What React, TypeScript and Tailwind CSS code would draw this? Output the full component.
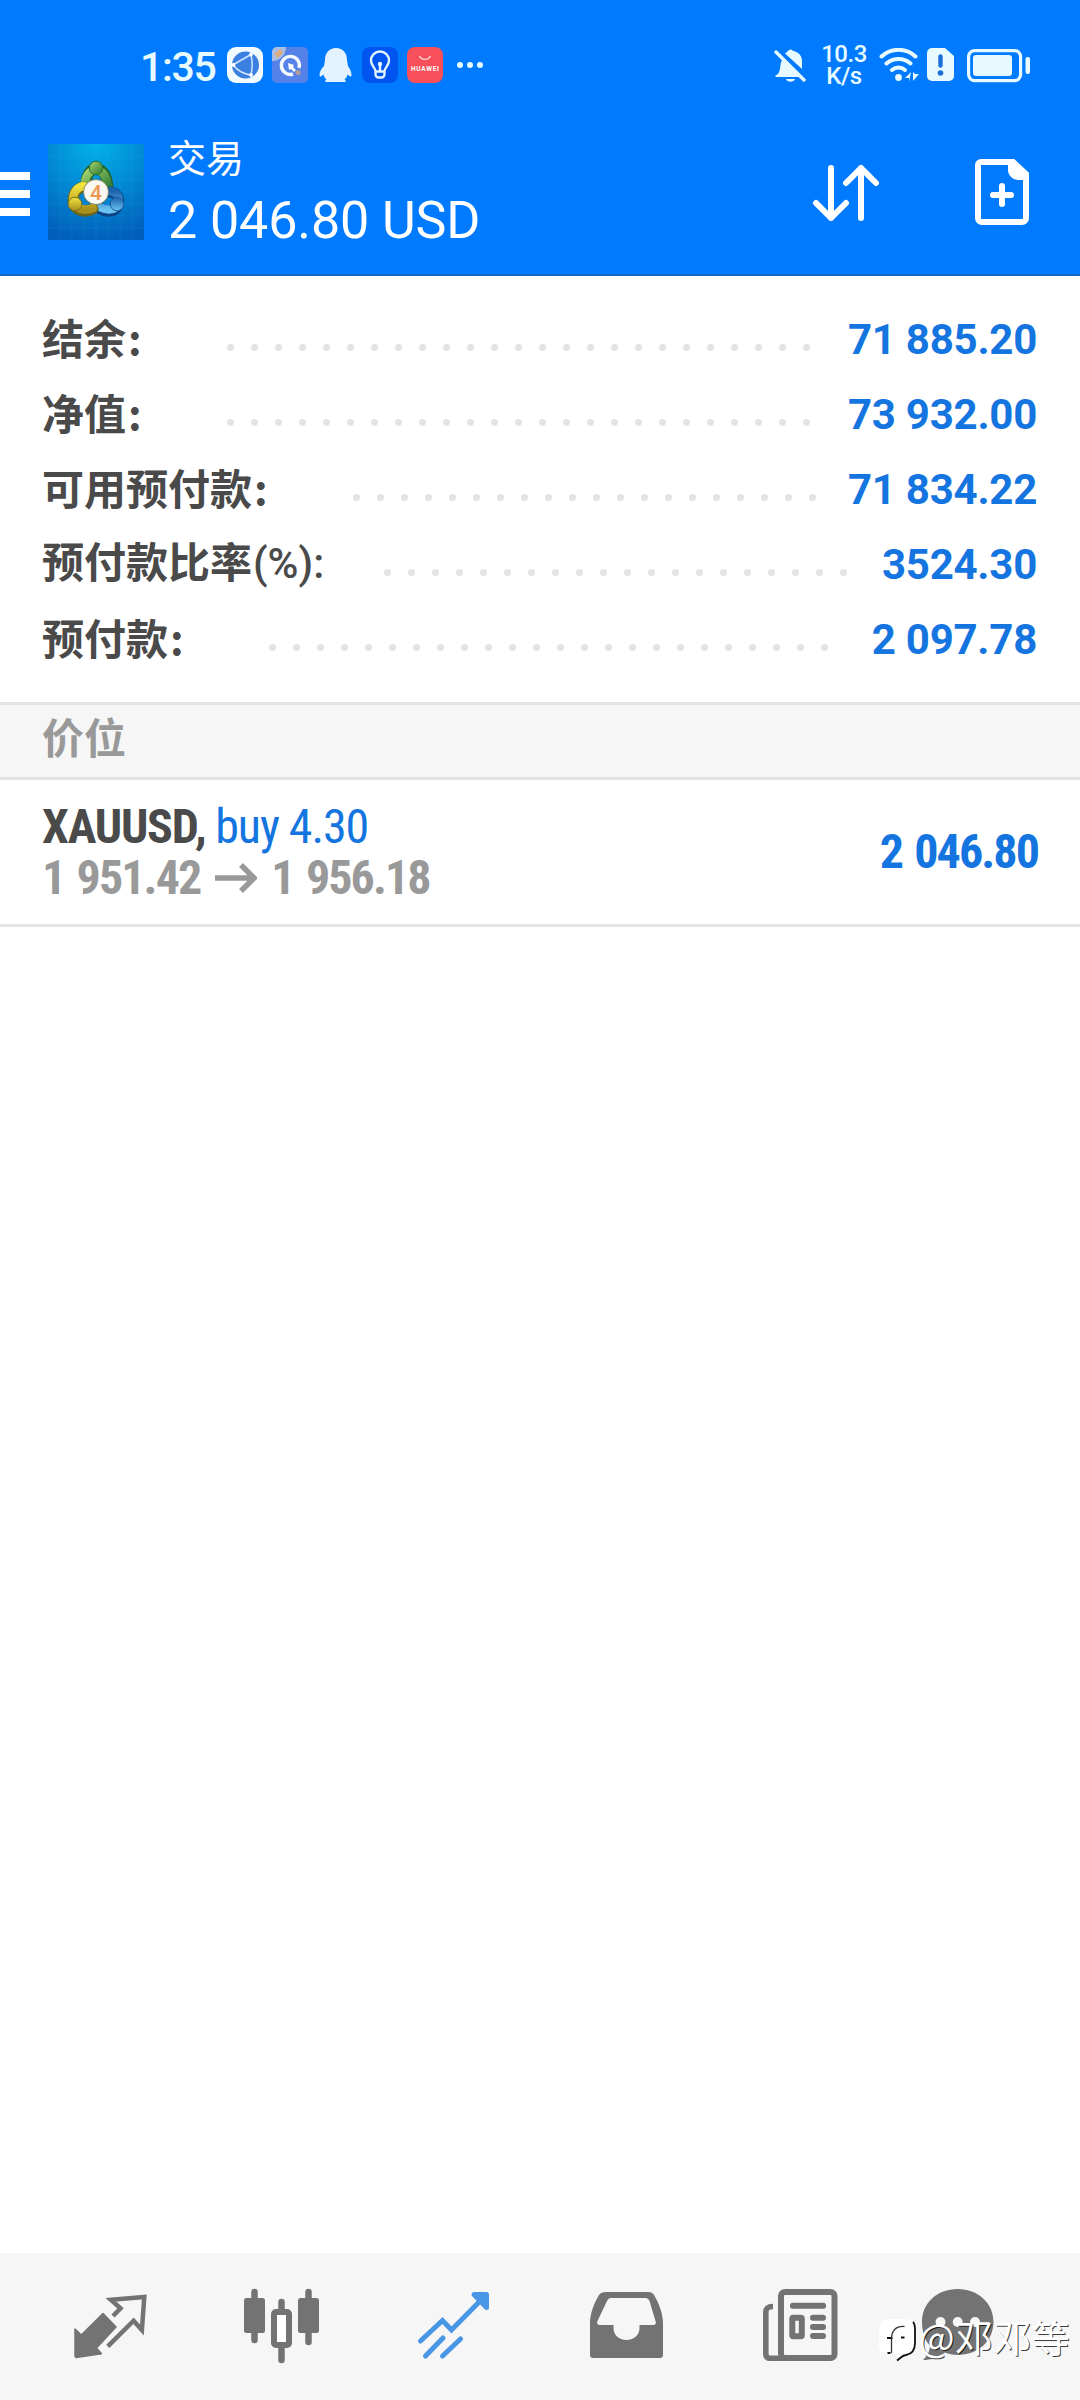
import React from 'react';

const summary = [
  { label: '结余', suffix: ':', value: '71 885.20', dots: 25, pad: 'w-[185px]' },
  { label: '净值', suffix: ':', value: '73 932.00', dots: 25, pad: 'w-[185px]' },
  { label: '可用预付款', suffix: ':', value: '71 834.22', dots: 20, pad: 'w-[311px]' },
  { label: '预付款比率', ratio: '(%):', value: '3524.30', dots: 20, pad: 'w-[342px]' },
  { label: '预付款', suffix: ':', value: '2 097.78', dots: 24, pad: 'w-[227px]' },
];

const StatusBar = () => (
  <div className="flex h-[130px] items-start pt-[46px] text-[#e6faff]">
    <span className="ml-[140px] w-[87px] pt-px text-[41px] leading-[40px] font-medium tracking-[-1.300px]">1:35</span>
    <div className="flex gap-[9px] pt-px">
      {/* browser */}
      <svg className="h-9 w-9" viewBox="0 0 36 36">
        <rect width="36" height="36" rx="9" fill="#f2fbff" />
        <circle cx="18.500" cy="18" r="13.500" fill="#3b7fe0" />
        <path d="M6.500 17.500 24 7.500M6.500 18.500C11 24 17 27 24 28M24 7.500c1.500 7 1.500 14 0 20" fill="none" stroke="#cfe6ff" strokeWidth="1.500" />
        <circle cx="6.500" cy="18" r="1.900" fill="#fff" />
        <circle cx="24" cy="7.500" r="1.900" fill="#fff" />
        <circle cx="24" cy="28" r="1.900" fill="#fff" />
      </svg>
      {/* game assistant */}
      <svg className="h-9 w-9" viewBox="0 0 36 36">
        <rect width="36" height="36" rx="5" fill="#5482e8" />
        <path d="M0 14V5a5 5 0 0 1 5-5h9c0 8-6 14-14 14Z" fill="#a9bde2" />
        <path d="m3 8 6-5M5 10l5-5" stroke="#e8a867" strokeWidth="2" />
        <path d="M21 27a9 9 0 1 1 6-6" fill="none" stroke="#f2f9ff" strokeWidth="3.400" />
        <path d="m16 16 6 2-1 2 3 3-2 2-3-3-2 1Z" fill="#fff" />
        <circle cx="26" cy="25.500" r="2.600" fill="#b09a9c" />
      </svg>
      {/* penguin */}
      <svg className="h-9 w-9" viewBox="0 0 36 36">
        <path d="M19 1c7 0 11 5 11 12l1 6c2 3 3.500 6 3.500 9 0 1.500-1 2-2 1l-2-1.500c-.5 2-1.500 4-3 5 2 1 1.500 2.500 0 2.500H9.500c-1.500 0-2-1.500 0-2.500-1.500-1-2.500-3-3-5l-2 1.500c-1 1-2 .5-2-1 0-3 1.500-6 4.500-9l1-6c0-7 4-12 11-12Z" fill="#e3f2ff" />
      </svg>
      {/* tips */}
      <svg className="h-9 w-9" viewBox="0 0 36 36">
        <rect width="36" height="36" rx="8" fill="#0055f0" />
        <path d="M13.500 24c0-3-4.500-5-4.500-10.500a9 9 0 0 1 18 0C27 19 22.500 21 22.500 24v3.500a3 3 0 0 1-3 3h-3a3 3 0 0 1-3-3Zm0 .5h9M18 24v-7" fill="none" stroke="#e0f4ff" strokeWidth="2.400" />
        <circle cx="18" cy="17" r="2.200" fill="#e0f4ff" />
      </svg>
      {/* store */}
      <svg className="h-9 w-9" viewBox="0 0 36 36">
        <rect width="36" height="36" rx="8" fill="#f7505a" />
        <path d="M12.500 9c2 4.500 9 4.500 11 0" fill="none" stroke="#ffd9dc" strokeWidth="1.300" />
        <text x="18" y="23.500" textAnchor="middle" textLength="28" fontSize="6.500" fontWeight="700" fontFamily="Roboto, sans-serif" fill="#fff">HUAWEI</text>
      </svg>
    </div>
    <div className="ml-[14px] flex gap-[4.500px] pt-4">
      <i className="h-[5.500px] w-[5.500px] rounded-full bg-current" />
      <i className="h-[5.500px] w-[5.500px] rounded-full bg-current" />
      <i className="h-[5.500px] w-[5.500px] rounded-full bg-current" />
    </div>
    <div className="mr-[48px] ml-auto flex">
      <svg className="mt-0.5 h-9 w-8" viewBox="0 0 32 36" fill="currentColor">
        <path d="M4 26c2-3 2-6 2.500-9 .2-2 .8-4 2-5.500L25 27.500V29H1.500v-1.500Z" />
        <path d="M11 5.500C12.500 4 14 3 14.500 2.500c1-1.500 3-1.500 4 0C24 4 28 7 28 13v8Z" />
        <path d="M12 31h9c-1 3.500-8 3.500-9 0Z" />
        <path d="m2 4 28 28" stroke="currentColor" strokeWidth="3.400" strokeLinecap="round" />
      </svg>
      <div className="-mt-[3px] ml-[14px] flex w-[48px] flex-col text-center text-[24px] leading-[22px] font-medium tracking-[-0.500px]">
        <span>10.3</span>
        <span>K/s</span>
      </div>
      <svg className="mt-0.5 ml-[11px] h-9 w-10" viewBox="0 0 40 36" fill="none" stroke="currentColor" strokeWidth="4" strokeLinecap="round">
        <path d="M2.500 8.500a25 25 0 0 1 34 0M7.500 15.500a18 18 0 0 1 24 0M13 22a10 10 0 0 1 13 0" />
        <circle cx="19.500" cy="29.500" r="3.400" fill="currentColor" stroke="none" />
        <path d="m32 24-6 6h4v4Zm2 0v9l6-7h-4Z" fill="currentColor" stroke="none" />
      </svg>
      <svg className="mt-0.5 ml-2 h-[34px] w-7" viewBox="0 0 28 34">
        <path d="M5 0h13l9 8v20a5 5 0 0 1-5 5H5a5 5 0 0 1-5-5V5a5 5 0 0 1 5-5Z" fill="currentColor" />
        <path d="M13.500 8.500v9" stroke="#1a6fd6" strokeWidth="4.400" strokeLinecap="round" />
        <circle cx="13.500" cy="25" r="2.800" fill="#1a6fd6" />
      </svg>
      <svg className="mt-[3px] ml-3 h-[34px] w-[65px]" viewBox="0 0 65 34">
        <rect x="1.600" y="1.600" width="52" height="30" rx="6" fill="none" stroke="currentColor" strokeWidth="3.200" />
        <rect x="6" y="6" width="39" height="21" rx="3" fill="currentColor" />
        <rect x="58.500" y="8" width="4.500" height="17" rx="2" fill="currentColor" />
      </svg>
    </div>
  </div>
);

const Logo = () => (
  <svg className="h-24 w-24" viewBox="0 0 96 96">
    <defs>
      <radialGradient id="sky" cx=".5" cy="0" r="1">
        <stop offset="0" stopColor="#02b2ea" />
        <stop offset=".55" stopColor="#0185d2" />
        <stop offset="1" stopColor="#0160bb" />
      </radialGradient>
      <linearGradient id="green" x1="0" y1="0" x2="1" y2="1">
        <stop offset="0" stopColor="#a5d46c" />
        <stop offset="1" stopColor="#2a7a35" />
      </linearGradient>
      <linearGradient id="gold" x1="0" y1="0" x2="0" y2="1">
        <stop offset="0" stopColor="#f0e33c" />
        <stop offset="1" stopColor="#a98f1c" />
      </linearGradient>
      <linearGradient id="blue" x1="0" y1="0" x2="0" y2="1">
        <stop offset="0" stopColor="#1c63ad" />
        <stop offset="1" stopColor="#6ac2f2" />
      </linearGradient>
    </defs>
    <rect width="96" height="96" fill="url(#sky)" />
    <path d="M12 0v96M24 0v96M36 0v96M48 0v96M60 0v96M72 0v96M84 0v96M0 12h96M0 24h96M0 36h96M0 48h96M0 60h96M0 72h96M0 84h96" stroke="#5cc4f5" strokeOpacity=".1" />
    <g fill="none" strokeLinecap="round">
      <path d="M38 39c1-10 5-14 10-14 8 0 12 9 12 21" stroke="#23642c" strokeWidth="11" />
      <path d="M37 39c1-9 6-13 11-13 7 0 12 8 12 20" stroke="url(#green)" strokeWidth="8.500" />
      <path d="M61 48c8 0 11 6 9 12-2 9-12 9-20 3" stroke="#0d4384" strokeWidth="11" />
      <path d="M61 47c8 0 11 6 9 12-2 8-12 8-20 3" stroke="url(#blue)" strokeWidth="8.500" />
      <path d="M36 43c-8 1-11 8-11 14 1 9 10 13 20 8" stroke="#67651c" strokeWidth="11" />
      <path d="M36 42c-8 1-11 8-11 14 1 8 10 12 20 8" stroke="url(#gold)" strokeWidth="8.500" />
    </g>
    <circle cx="48" cy="24" r="6.800" fill="url(#green)" stroke="#276b2d" />
    <circle cx="27" cy="60" r="6.800" fill="url(#gold)" stroke="#80701c" />
    <circle cx="69" cy="60" r="6.800" fill="url(#blue)" stroke="#1b5b9c" />
    <circle cx="48" cy="48" r="12.500" fill="#faf8f2" stroke="#75713f" strokeWidth=".8" />
    <text x="48" y="55.500" textAnchor="middle" fontSize="21" fontWeight="500" fontFamily="Roboto, sans-serif" fill="#ed9850">4</text>
  </svg>
);

const Header = () => (
  <header className="h-[276px] border-b-2 border-[#0c69c4] bg-[#007aff] text-white">
    <StatusBar />
    <div className="flex items-start">
      <div className="mt-[42px] flex w-[30px] flex-col gap-2.5">
        <span className="h-2 bg-white" />
        <span className="h-2 bg-white" />
        <span className="h-2 bg-white" />
      </div>
      <div className="ml-[18px] pt-[14px]">
        <Logo />
      </div>
      <div className="ml-6 pt-[7px]">
        <h1 className="text-[38px] leading-[44px]">交易</h1>
        <p className="mt-[8px] text-[52px] leading-[64px] tracking-[-0.100px]">2 046.80 USD</p>
      </div>
      <div className="mr-[51px] ml-auto flex pt-[29px]">
        <svg className="mt-[3px] h-[60px] w-[68px]" viewBox="0 0 68 60" fill="none" stroke="currentColor" strokeWidth="6" strokeLinecap="round" strokeLinejoin="round">
          <path d="M19 6v50M4 41l15 15 15-15M49 56V6M34 21 49 6l15 15" />
        </svg>
        <svg className="ml-[95px] h-[66px] w-[54px]" viewBox="0 0 54 66">
          <path d="M6 3h32l13 12v44a4 4 0 0 1-4 4H7a4 4 0 0 1-4-4V6a3 3 0 0 1 3-3Z" fill="none" stroke="currentColor" strokeWidth="6" />
          <path d="M33 3h7l12 12v6h-8c-7 0-11-5-11-10Z" fill="currentColor" />
          <path d="M27 27v18M18 36h18" stroke="currentColor" strokeWidth="6" strokeLinecap="round" />
        </svg>
      </div>
    </div>
  </header>
);

const navIcon = 'h-20 w-20';

const BottomNav = () => (
  <nav className="relative flex h-[147px] bg-[#f6f6f6] pt-8 pl-[70px] text-[#737373]">
    <div className="flex gap-[92px]">
      <svg className={navIcon} viewBox="0 0 80 80">
        <path d="m5 44 6.300 6L33 28.500 46 42 26.500 63l5 5.700L6 72.500 5 71Z" fill="currentColor" stroke="currentColor" strokeWidth="1.500" strokeLinejoin="round" />
        <path d="m43 31 7.500-7.700-9.600-8.600 33.400-2.700-2.400 33-8.300-9.300-25.800 25.600" fill="none" stroke="currentColor" strokeWidth="4.500" />
      </svg>
      <svg className={navIcon} viewBox="0 0 80 80" fill="currentColor">
        <path d="M12.500 7v48M39.500 17v10M39.500 60v15M66.500 7v50" stroke="currentColor" strokeWidth="6.500" strokeLinecap="round" />
        <rect x="2" y="13" width="21" height="35" rx="2.500" />
        <rect x="56" y="13" width="21" height="35" rx="2.500" />
        <rect x="32" y="27" width="15" height="33" rx="2" fill="#fff" stroke="currentColor" strokeWidth="6" />
      </svg>
      <svg className={navIcon} viewBox="0 0 80 80" fill="none" stroke="#4896e6" strokeWidth="5" strokeLinecap="round">
        <path d="m6.500 56 22-20.500 9 9.500L72 10" strokeLinejoin="miter" />
        <path d="M60 9.500h12.500v13Z" fill="#4896e6" strokeLinejoin="round" />
        <path d="m11.500 71 17.500-18M28.500 71 46.500 54" />
      </svg>
      <svg className={navIcon} viewBox="0 0 80 80">
        <path fillRule="evenodd" fill="currentColor" d="M20 7h42c3 0 5 1 6 3 5 8 9 19 9 28v32c0 2-1 3-3 3H7c-2 0-3-1-3-3V38c0-9 4-20 9-28 1-2 4-3 7-3Zm5 6c-2 0-3 1-4 3l-9.500 20c-1 2 0 4 2 4h14v3c0 16 26 16 26 0v-3h14c2 0 3-2 2-4l-6-20c-1-2-2-3-4-3Z" />
      </svg>
      <svg className={navIcon} viewBox="0 0 80 80" fill="currentColor">
        <path d="M15 21.500c-5 0-7.200 1.500-7.200 6V69c0 3 1.500 4.300 4.500 4.300H26" fill="none" stroke="currentColor" strokeWidth="5.600" />
        <rect x="23" y="7" width="53.500" height="66" rx="4" fill="none" stroke="currentColor" strokeWidth="6" />
        <rect x="32" y="17.700" width="36" height="6" rx="2.500" />
        <rect x="34.300" y="32.700" width="9.500" height="18.500" rx="1" fill="none" stroke="currentColor" strokeWidth="6" />
        <rect x="52" y="29.700" width="16" height="6" rx="3" />
        <rect x="52" y="39" width="16" height="6" rx="3" />
        <rect x="52" y="48" width="16" height="6" rx="3" />
      </svg>
      <svg className="-ml-3 h-20 w-20" viewBox="0 0 80 80">
        <path d="M39.700 4C60 4 75.500 18 75.500 37S60 70 39.700 70c-5 0-9-1-12.700-2.500-6 5-14 7.500-22 7.500 4-4 6.500-8 7-14C7 55 4 47 4 37 4 18 19 4 39.700 4Z" fill="currentColor" />
        <circle cx="22.500" cy="37" r="5" fill="#f6f6f6" />
        <circle cx="39.700" cy="37" r="5" fill="#f6f6f6" />
        <circle cx="57" cy="37" r="5" fill="#f6f6f6" />
      </svg>
    </div>
    {/* author stamp over the last tab */}
    <div className="absolute top-[62px] right-[10px] flex items-start text-white">
      <svg className="h-[48px] w-[40px]" viewBox="0 0 40 48">
        <path d="M12 4h14c8 0 11 4 11 11v13c0 7-3 11-9 12-3 1-5 3-9 5l1-6h-8C4 39 1 36 1 29V16C1 8 4 4 12 4Z" fill="#fff" />
        <path d="M35 7c2 2 2 4 2 8v13c0 7-3 11-9 12-4 0-5 3-9 5.500M9 23h5.500M12.500 38h-3M23 22.500h3.500" fill="none" stroke="#111" strokeWidth="1.800" />
        <path d="M13.500 38V24c0-8 4-13 13-12.500" fill="none" stroke="#333" strokeWidth="1.300" />
      </svg>
      <span className="-mt-[3px] ml-px font-['Noto_Sans_CJK_SC',sans-serif] text-[38px] leading-[48px] tracking-[0.300px] whitespace-nowrap [text-shadow:1px_1px_0_rgba(0,0,0,0.75)]">@邓邓等</span>
    </div>
  </nav>
);

export default function App() {
  return (
    <div className="flex h-[2400px] w-[1080px] flex-col bg-white font-['Roboto','Noto_Sans_CJK_SC',sans-serif]">
      <Header />

      {/* account summary */}
      <section className="h-[426px] pt-[26px] pr-[43px] pl-[42px] text-[42px] font-bold">
        {summary.map((row) => (
          <div key={row.label} className="flex h-[75px] items-center">
            <div className={`${row.pad} shrink-0 pb-[5px] font-['Noto_Sans_CJK_SC',sans-serif] leading-[60px] whitespace-nowrap text-[#4a4a4a]`}>
              {row.label}
              {row.suffix && <span className="pl-0.5">{row.suffix}</span>}
              {row.ratio && <span className="pl-px font-['Roboto',sans-serif] font-medium">{row.ratio}</span>}
            </div>
            <div className="flex gap-[17px] pt-[15px]">
              {Array.from({ length: row.dots }, (_, i) => (
                <span key={i} className="h-[7px] w-[7px] rounded-full bg-[#e4e4e4]" />
              ))}
            </div>
            <div className="ml-auto tracking-[-0.250px] whitespace-nowrap text-[#1475e0]">{row.value}</div>
          </div>
        ))}
      </section>

      <div className="flex h-[78px] items-center border-y-3 border-[#e2e2e2] bg-[#f6f6f6] px-[42px] pb-1 text-[42px] font-bold text-[#999]">
        价位
      </div>

      {/* open position */}
      <section className="flex h-[147px] items-center justify-between border-b-3 border-[#e6e6e6] pr-[42px] pl-[42px] text-[48px] leading-[51px] font-bold tracking-[-1.900px] [word-spacing:3px] font-stretch-condensed">
        <div>
          <p className="tracking-[-1.200px] text-[#4a4a4a] [word-spacing:0]">
            XAUUSD, <span className="font-normal tracking-[-1.100px] text-[#1475e0]">buy 4.30</span>
          </p>
          <p className="flex items-center text-[#999]">
            1 951.42
            <svg className="mr-[14px] ml-[15px] h-[30px] w-[42px]" viewBox="0 0 42 30" fill="none" stroke="currentColor" strokeWidth="5.500">
              <path d="M0 15h38M26 2l13 13-13 13" />
            </svg>
            1 956.18
          </p>
        </div>
        <p className="pb-0.5 text-[#1475e0]">2 046.80</p>
      </section>

      <div className="flex-1" />
      <BottomNav />
    </div>
  );
}
